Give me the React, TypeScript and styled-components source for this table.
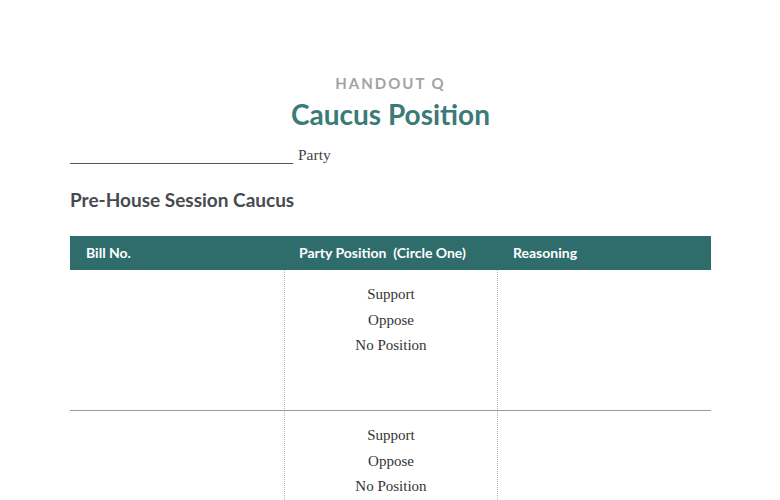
import React from "react";
import styled, { createGlobalStyle } from "styled-components";

const Global = createGlobalStyle`
  html, body { margin: 0; padding: 0; background: #fff; }
  body { font-family: "Liberation Serif", serif; }
`;

const Page = styled.div`
  width: 780px;
  height: 500px;
  overflow: hidden;
  box-sizing: border-box;
  padding: 73px 69px 0 70px;
  display: flex;
  flex-direction: column;
`;

const Eyebrow = styled.div`
  font-family: Lato, sans-serif;
  font-weight: 700;
  font-size: 15px;
  letter-spacing: 2px;
  color: #a3a3a3;
  text-align: center;
  line-height: 20px;
`;

const Title = styled.h1`
  margin: 4px 0 0;
  font-family: Lato, sans-serif;
  font-weight: 700;
  font-size: 28px;
  line-height: 34px;
  color: #3b7a77;
  text-align: center;
`;

const PartyRow = styled.div`
  margin-top: 15px;
  display: flex;
  align-items: flex-end;
  gap: 5px;
  font-size: 15.5px;
  color: #444;
  line-height: 18px;
`;

const Blank = styled.span`
  width: 223px;
  border-bottom: 1px solid #555;
  height: 16px;
`;

const Section = styled.h2`
  margin: 24px 0 0;
  font-family: Lato, sans-serif;
  font-weight: 700;
  font-size: 19px;
  line-height: 24px;
  color: #474a4f;
`;

const Table = styled.div`
  margin-top: 24px;
  display: grid;
  grid-template-columns: 214px 214px 1fr;
`;

const HeadCell = styled.div<{ $pad: number }>`
  background: #2e6d6c;
  color: #fff;
  font-family: Lato, sans-serif;
  font-weight: 700;
  font-size: 14px;
  height: 34px;
  line-height: 34px;
  padding-left: ${(p) => p.$pad}px;
`;

const Cell = styled.div<{ $mid?: boolean; $last?: boolean }>`
  height: 141px;
  box-sizing: border-box;
  border-bottom: ${(p) => (p.$last ? "none" : "1px solid #9a9a9a")};
  ${(p) =>
    p.$mid
      ? "border-left: 1px dotted #b5b5b5; border-right: 1px dotted #b5b5b5;"
      : ""}
  display: flex;
  flex-direction: column;
  align-items: center;
  padding-top: 12px;
`;

const Option = styled.div`
  font-size: 15px;
  line-height: 25.5px;
  color: #333;
`;

const rows = [0, 1];

export default function App() {
  return (
    <>
      <Global />
      <Page>
        <Eyebrow>HANDOUT Q</Eyebrow>
        <Title>Caucus Position</Title>
        <PartyRow>
          <Blank />
          <span>Party</span>
        </PartyRow>
        <Section>Pre-House Session Caucus</Section>
        <Table>
          <HeadCell $pad={16}>Bill No.</HeadCell>
          <HeadCell $pad={15}>Party Position&nbsp; (Circle One)</HeadCell>
          <HeadCell $pad={15}>Reasoning</HeadCell>
          {rows.map((r) => (
            <React.Fragment key={r}>
              <Cell $last={r === 1} />
              <Cell $mid $last={r === 1}>
                <Option>Support</Option>
                <Option>Oppose</Option>
                <Option>No Position</Option>
              </Cell>
              <Cell $last={r === 1} />
            </React.Fragment>
          ))}
        </Table>
      </Page>
    </>
  );
}
